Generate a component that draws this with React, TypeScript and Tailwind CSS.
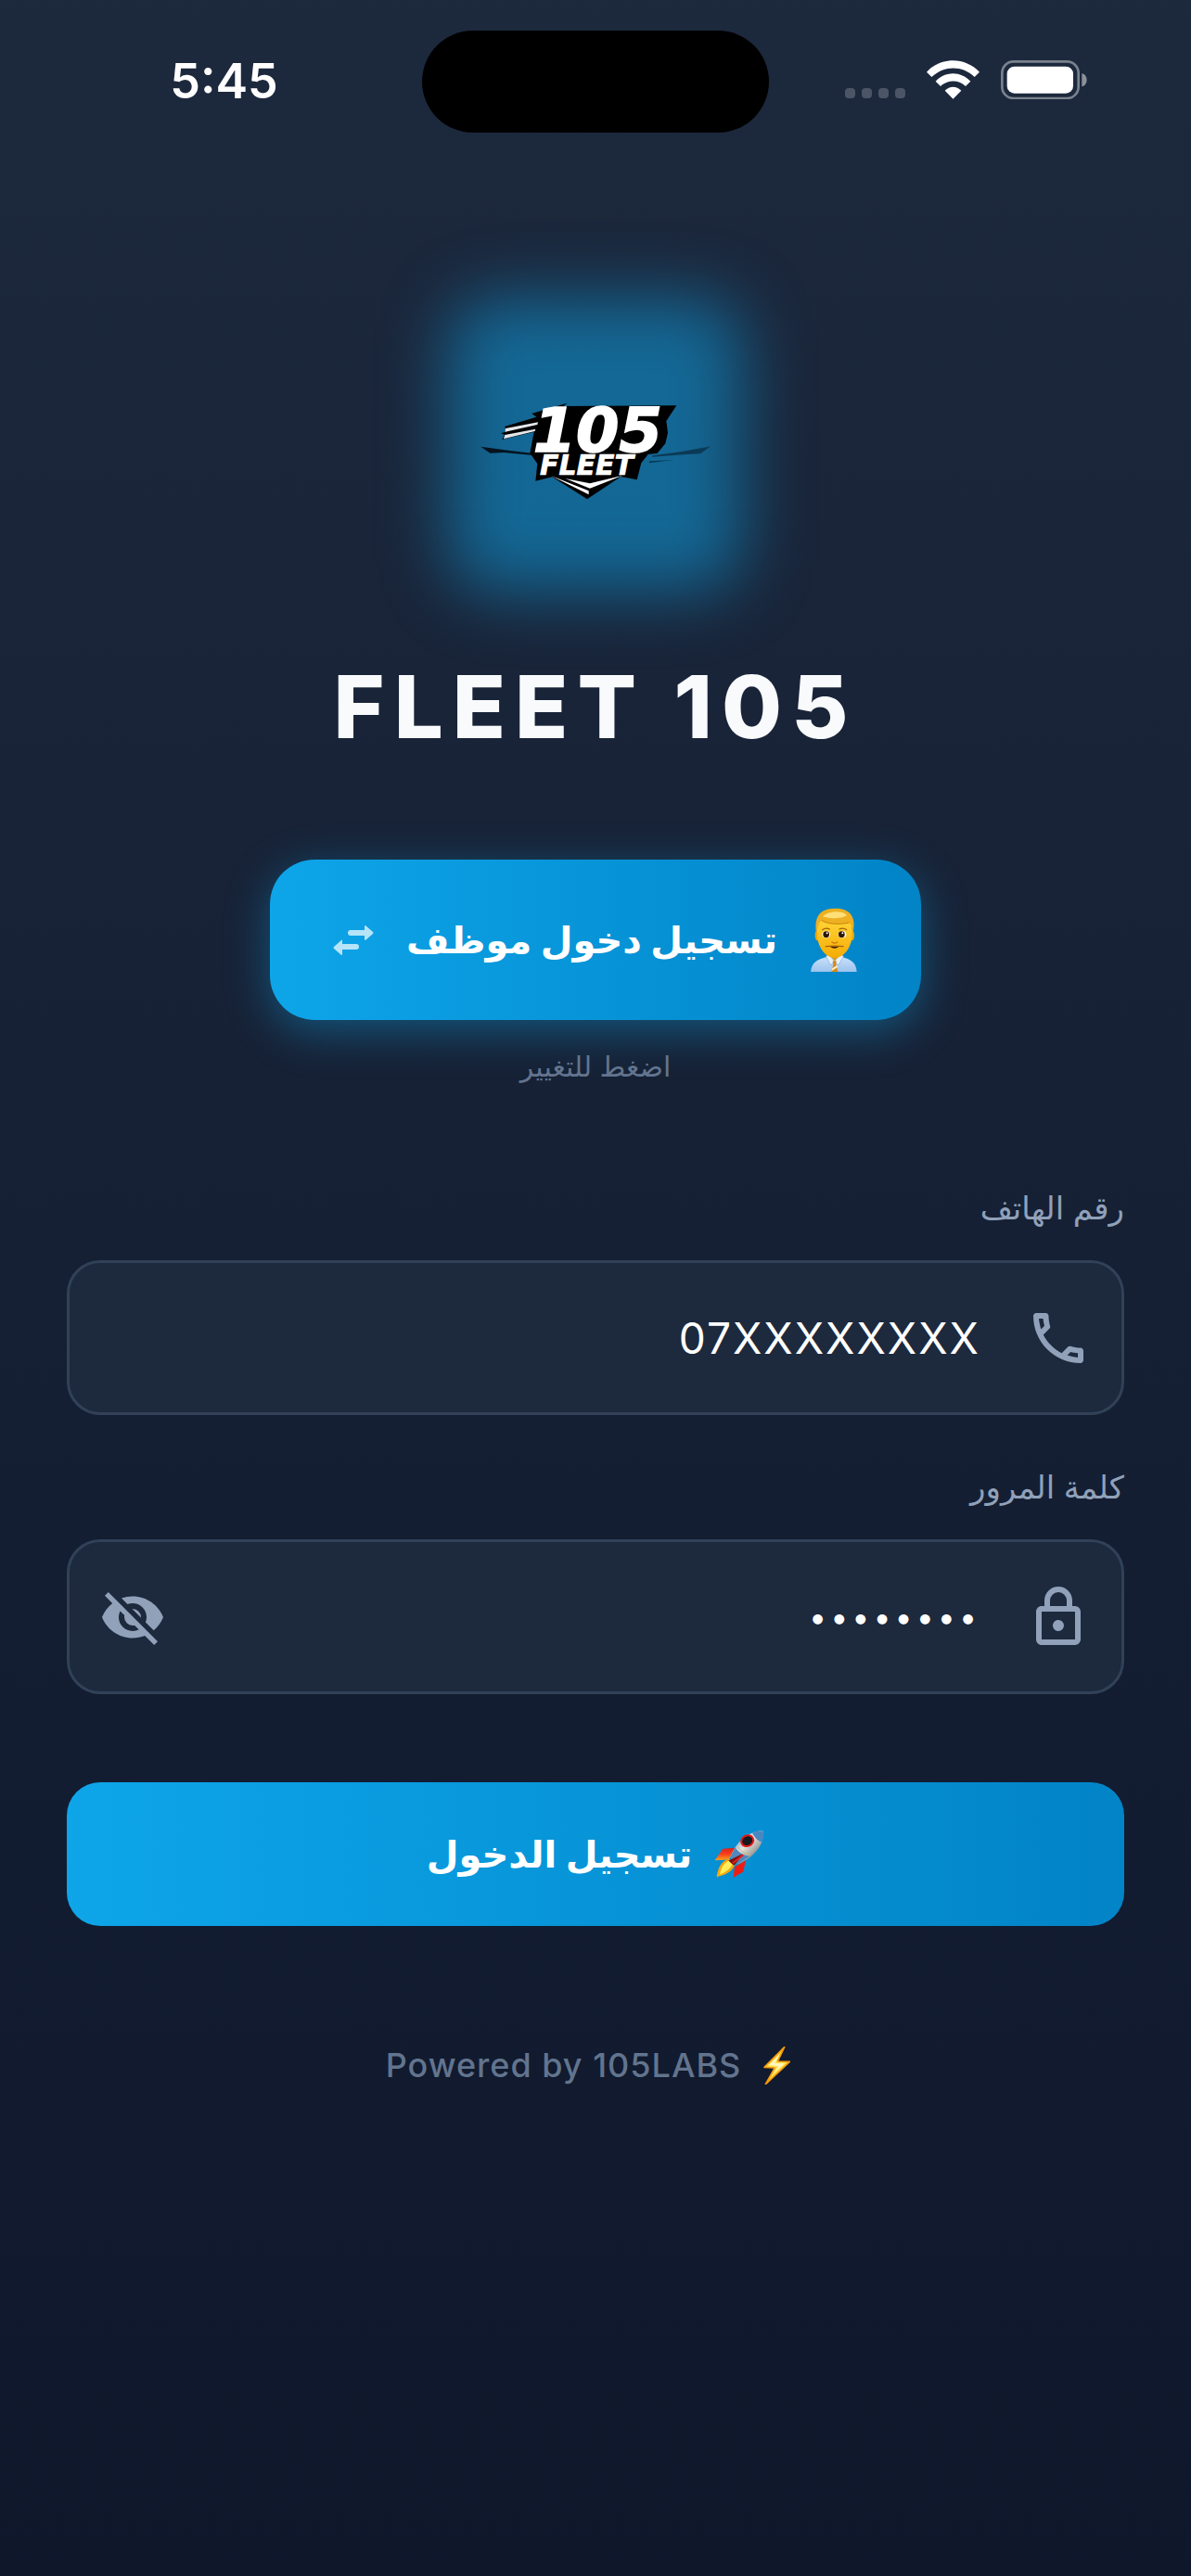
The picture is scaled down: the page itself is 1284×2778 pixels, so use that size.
import React, { useId } from 'react';

const StatusBar = () => (
  <header className="grid grid-cols-[1fr_374px_1fr] items-center pt-[33px]">
    <div className="pl-7 text-center text-[52px] leading-[60px] font-semibold text-white">5:45</div>
    <div className="h-[110px] rounded-full bg-black" />
    <div className="flex items-end justify-center gap-[23px] pr-[30px] pb-1">
      <div className="flex gap-[7px] pb-px">
        {[0, 1, 2, 3].map((dot) => (
          <span key={dot} className="h-[11px] w-[11px] rounded-[4px] bg-[#4b5565]" />
        ))}
      </div>
      <svg className="h-[42px] w-[57px]" viewBox="0 0 171 126" fill="#fff">
        <path d="M0 38 C46 -12 125 -12 171 38 L155 54 C115 16 56 16 16 54 Z" />
        <path d="M29 68 C61 34 110 34 142 68 L126 84 C102 62 69 62 45 84 Z" />
        <path d="M59 98 C75 82 96 82 112 98 L85.500 125 Z" />
      </svg>
      <svg className="h-[42px] w-[93px]" viewBox="0 0 279 126">
        <rect x="4" y="4" width="247" height="119" rx="37" fill="none" stroke="#7a818d" strokeWidth="8" />
        <rect x="20" y="20" width="214" height="87" rx="24" fill="#fff" />
        <path d="M262 43 C283 46 283 82 262 85 Z" fill="#8b919b" />
      </svg>
    </div>
  </header>
);

const Logo = () => (
  <div dir="ltr" className="relative flex h-[316px] w-[316px] items-center justify-center">
    <div className="absolute inset-0 rounded-[48px] bg-[#0ea5e9]/52 blur-[36px]" />
    <svg className="relative h-[150px] w-[290px]" viewBox="-9 -15 870 450" role="img" aria-label="105 Fleet">
      <path d="M55 215 L150 228 L232 238 L232 244 L130 234 L85 236 Z" fill="#04131f" />
      <path d="M798 214 L700 232 L610 244 L610 248 L720 240 L765 238 Z" fill="#0b3a56" />
      <path d="M600 262 L680 258 L600 268 Z" fill="#0b3a56" />
      <path
        d="M334 74 L322 84 L688 82 L655 132 L660 170 L652 205 L626 236 L596 240 L574 268 L560 322 L508 312 L399 385 L286 313 L232 326 L238 270 L214 236 L236 120 L220 108 Z"
        fill="#000"
      />
      <path d="M132 150 L240 118 L240 164 L124 192 L132 176 L120 172 L140 166 Z" fill="#000" />
      <path d="M135 156 L240 136 L238 144 L134 167 Z M133 177 L232 158 L230 165 L129 190 Z" fill="#e5e7eb" />
      <text
        x="224"
        y="230"
        fill="#fff"
        stroke="#fff"
        strokeWidth="5"
        className="font-['DejaVu_Sans'] text-[200px] font-bold italic"
      >
        105
      </text>
      <text
        x="246"
        y="306"
        fill="#fff"
        stroke="#fff"
        strokeWidth="2"
        className="font-['DejaVu_Sans'] text-[90px] font-bold italic"
      >
        FLEET
      </text>
      <path d="M282 309 L404 358 L404 370 Z" fill="#fff" />
      <path d="M328 318 L408 334 L514 308 L408 350 Z" fill="#fff" />
    </svg>
  </div>
);

const EmployeeEmoji = () => (
  <svg className="h-[71px] w-[52px]" viewBox="40 55 156 213" aria-hidden="true">
    <defs>
      <linearGradient id="face" x1="0" y1="0" x2="0" y2="1">
        <stop offset="0" stopColor="#ffd93a" />
        <stop offset="1" stopColor="#f6ab06" />
      </linearGradient>
      <linearGradient id="shirt" x1="0" y1="0" x2="0" y2="1">
        <stop offset="0" stopColor="#c9e1fb" />
        <stop offset="1" stopColor="#9dc3ec" />
      </linearGradient>
    </defs>
    <path d="M43 265 C46 236 60 226 98 216 L142 216 C176 226 190 236 192 265 Z" fill="url(#shirt)" />
    <path d="M98 212 L120 234 L143 212 L143 204 L98 204 Z" fill="#e29a0b" />
    <path d="M93 216 L99 207 L120 230 L108 244 Z M149 216 L142 207 L120 230 L132 244 Z" fill="#e4f1ff" stroke="#86abd4" strokeWidth="2" />
    <path d="M114 230 L126 230 L125 240 L131 265 L110 265 L116 240 Z" fill="#d98b18" />
    <path d="M113 253 L129 244 L130 250 L111 262 Z" fill="#fff0cc" />
    <ellipse cx="64" cy="147" rx="7" ry="17" fill="#efa408" />
    <ellipse cx="177" cy="147" rx="7" ry="17" fill="#efa408" />
    <path d="M64 112 C64 74 177 74 177 112 L177 148 C175 187 149 220 121 220 C92 220 66 187 64 148 Z" fill="url(#face)" />
    <path d="M61 138 C52 74 84 60 124 60 C164 60 192 80 180 138 C178 124 175 112 167 106 C132 114 95 110 77 98 C68 110 66 124 61 138 Z" fill="#eeb022" />
    <path d="M82 86 C96 70 144 64 160 82 C146 92 106 96 82 86 Z" fill="#ffdf78" />
    <path d="M77 98 C95 110 132 114 167 106" fill="none" stroke="#c98309" strokeWidth="3" />
    <path d="M81 129 Q92 121 104 127 M136 127 Q148 121 159 129" fill="none" stroke="#a3620a" strokeWidth="4" strokeLinecap="round" />
    <ellipse cx="93" cy="144" rx="13" ry="11" fill="#fff" />
    <ellipse cx="145" cy="144" rx="13" ry="11" fill="#fff" />
    <circle cx="93" cy="144" r="10" fill="#2d1606" />
    <circle cx="143" cy="144" r="10" fill="#2d1606" />
    <circle cx="96" cy="140" r="3" fill="#fff" />
    <circle cx="146" cy="140" r="3" fill="#fff" />
    <path d="M112 169 Q120 176 129 169" fill="none" stroke="#c77a08" strokeWidth="4" strokeLinecap="round" />
    <path d="M92 183 Q120 180 148 183" fill="none" stroke="#a3600a" strokeWidth="4" strokeLinecap="round" />
    <path d="M106 184 H134 Q120 195 106 184 Z" fill="#3a1a05" />
  </svg>
);

const RocketEmoji = () => (
  <svg className="h-[53px] w-[54px]" viewBox="58 58 162 158" aria-hidden="true">
    <defs>
      <linearGradient id="hull" x1="0" y1="0" x2="1" y2="1">
        <stop offset="0.150" stopColor="#6aa3d6" />
        <stop offset="0.450" stopColor="#e3e3df" />
        <stop offset="0.650" stopColor="#a9a9a5" />
        <stop offset="0.900" stopColor="#3d4650" />
      </linearGradient>
      <linearGradient id="fin" x1="0" y1="0" x2="0" y2="1">
        <stop offset="0" stopColor="#dd2018" />
        <stop offset="0.500" stopColor="#f8401c" />
        <stop offset="1" stopColor="#fba21b" />
      </linearGradient>
    </defs>
    <path d="M125 117 L86 120 L60 157 L106 155 Z" fill="url(#fin)" />
    <path d="M160 157 L124 178 L120 213 L152 194 Z" fill="#ee1d14" />
    <path d="M106 153 C82 158 70 180 66 211 C91 205 111 199 124 174 Z" fill="#f5a70e" />
    <path d="M108 157 C88 165 80 182 76 203 C96 195 110 184 118 169 Z" fill="#ffed5a" />
    <path d="M216 62 C178 60 133 88 110 146 L134 170 C178 151 220 116 216 62 Z" fill="url(#hull)" />
    <path d="M216 62 C204 61 192 63 181 68 C187 82 198 94 212 98 C217 88 218 74 216 62 Z" fill="#4987c2" />
    <path d="M126 116 L110 146 L134 170 L173 144 C154 142 137 132 126 116 Z" fill="#4e88bd" />
    <path d="M132 112 C142 126 156 136 174 140" fill="none" stroke="#c9b77c" strokeWidth="3" />
    <path d="M104 158 L148 137 C141 152 132 164 121 174 Z" fill="#7d1010" />
    <path d="M118 166 L152 139" stroke="#e5201a" strokeWidth="6" />
    <ellipse cx="165" cy="94" rx="20" ry="17" transform="rotate(-25 165 94)" fill="#16191d" stroke="#e21818" strokeWidth="6" />
  </svg>
);

const BoltEmoji = () => (
  <svg className="h-[41px] w-[29px]" viewBox="1265 57 87 123" aria-hidden="true">
    <path d="M1333 59 L1268 124 L1302 126 L1272 179 L1350 106 L1311 105 Z" fill="#ffdf4d" stroke="#f59a0b" strokeWidth="5" strokeLinejoin="round" />
    <path d="M1318 82 L1282 118 L1314 120 L1297 145 L1334 112 L1302 111 Z" fill="#fff6bf" />
  </svg>
);

const SwapIcon = () => (
  <svg className="h-[32px] w-[44px]" viewBox="0 0 44 32" fill="#b6e4f9" aria-hidden="true">
    <path d="M19 5 H34 V1 Q34 0 35 0 L43 7 Q44 8 43 9 L35 16 Q34 16 34 15 V11 H19 A3 3 0 0 1 19 5 Z" />
    <path d="M25 20 H10 V16 Q10 15 9 16 L1 23 Q0 24 1 25 L9 32 Q10 32 10 31 V26 H25 A3 3 0 0 0 25 20 Z" />
  </svg>
);

const phonePath =
  'M20,15.5C18.8,15.5 17.5,15.3 16.4,14.9C16.3,14.9 16.2,14.9 16.1,14.9C15.8,14.9 15.6,15 15.4,15.2L13.2,17.4C10.4,15.9 8,13.6 6.6,10.8L8.8,8.6C9.1,8.3 9.2,7.9 9,7.6C8.7,6.5 8.5,5.2 8.5,4C8.5,3.5 8,3 7.5,3H4C3.5,3 3,3.5 3,4C3,13.4 10.6,21 20,21C20.5,21 21,20.5 21,20V16.5C21,16 20.5,15.5 20,15.5M5,5H6.5C6.6,5.9 6.8,6.8 7,7.6L5.8,8.8C5.4,7.6 5.1,6.3 5,5M19,19C17.7,18.9 16.4,18.6 15.2,18.2L16.4,17C17.2,17.2 18.1,17.4 19,17.4V19Z';
const lockPath =
  'M12,17C10.89,17 10,16.1 10,15C10,13.89 10.89,13 12,13A2,2 0 0,1 14,15A2,2 0 0,1 12,17M18,20V10H6V20H18M18,8A2,2 0 0,1 20,10V20A2,2 0 0,1 18,22H6C4.89,22 4,21.1 4,20V10C4,8.89 4.89,8 6,8H7V6A5,5 0 0,1 12,1A5,5 0 0,1 17,6V8H18M12,3A3,3 0 0,0 9,6V8H15V6A3,3 0 0,0 12,3Z';
const eyeOffPath =
  'M11.83,9L15,12.16C15,12.11 15,12.05 15,12A3,3 0 0,0 12,9C11.94,9 11.89,9 11.83,9M7.53,9.8L9.08,11.35C9.03,11.56 9,11.77 9,12A3,3 0 0,0 12,15C12.22,15 12.44,14.97 12.65,14.92L14.2,16.45C13.53,16.78 12.79,17 12,17A5,5 0 0,1 7,12C7,11.21 7.2,10.47 7.53,9.8M2,4.27L4.28,6.55L4.73,7C3.08,8.3 1.78,10 1,12C2.73,16.39 7,19.5 12,19.5C13.55,19.5 15.03,19.2 16.38,18.66L16.81,19.08L19.73,22L21,20.73L3.27,3M12,7A5,5 0 0,1 17,12C17,12.64 16.87,13.26 16.64,13.82L19.57,16.75C21.07,15.5 22.27,13.86 23,12C21.27,7.61 17,4.5 12,4.5C10.6,4.5 9.26,4.75 8,5.2L10.17,7.35C10.74,7.13 11.35,7 12,7Z';

const FieldIcon = ({ path }: { path: string }) => (
  <svg className="h-18 w-18 shrink-0 fill-slate-400" viewBox="0 0 24 24" aria-hidden="true">
    <path d={path} />
  </svg>
);

type FieldProps = {
  label: string;
  type: string;
  placeholder: string;
  icon: string;
  action?: React.ReactNode;
};

const Field = ({ label, type, placeholder, icon, action }: FieldProps) => {
  const id = useId();
  return (
    <div>
      <label htmlFor={id} className="block text-[34px] leading-[40px] text-slate-400">
        {label}
      </label>
      <div className="mt-9 flex h-[167px] items-center gap-12 rounded-[36px] border-3 border-slate-700 bg-slate-800 px-8">
        <FieldIcon path={icon} />
        <input
          id={id}
          type={type}
          dir="ltr"
          placeholder={placeholder}
          className={`h-full min-w-0 flex-1 bg-transparent text-right text-white outline-none placeholder:text-white ${
            type === 'password' ? 'text-[34px] tracking-[4px]' : 'text-[46px] tracking-[2px]'
          }`}
        />
        {action}
      </div>
    </div>
  );
};

const App = () => {
  return (
    <div className="min-h-screen bg-linear-to-b from-slate-800 to-slate-900 font-['Inter','DejaVu_Sans',sans-serif]">
      <StatusBar />

      <main dir="rtl" className="flex flex-col items-center px-18 pt-[179px]">
        <Logo />
        <h1 dir="ltr" className="mt-[68px] text-[94px] leading-[112px] font-extrabold tracking-[10px] text-slate-50">
          FLEET 105
        </h1>

        <button
          type="button"
          className="mt-[109px] flex h-[173px] w-[702px] items-center justify-between rounded-[48px] bg-linear-to-r from-[#0ea5e9] to-[#0284c7] px-17 text-[40px] font-bold text-white shadow-[0_12px_48px_rgba(14,165,233,0.400)]"
        >
          <EmployeeEmoji />
          <span>تسجيل دخول موظف</span>
          <SwapIcon />
        </button>
        <p className="mt-7 text-[30px] leading-[44px] text-slate-500">اضغط للتغيير</p>

        <form className="mt-[111px] w-full" onSubmit={(e) => e.preventDefault()}>
          <div className="space-y-[58px]">
            <Field label="رقم الهاتف" type="tel" placeholder="07XXXXXXXX" icon={phonePath} />
            <Field
              label="كلمة المرور"
              type="password"
              placeholder="••••••••"
              icon={lockPath}
              action={
                <button type="button" aria-label="إظهار كلمة المرور">
                  <FieldIcon path={eyeOffPath} />
                </button>
              }
            />
          </div>
          <button
            type="submit"
            className="mt-[95px] flex h-[155px] w-full items-center justify-center gap-6 rounded-[36px] bg-linear-to-r from-[#0ea5e9] to-[#0284c7] text-[40px] font-bold text-white"
          >
            <RocketEmoji />
            <span>تسجيل الدخول</span>
          </button>
        </form>

        <footer dir="ltr" className="mt-[126px] flex items-center gap-6 pr-4 text-[36px] leading-[48px] font-medium tracking-[1px] text-slate-500">
          <span>Powered by 105LABS</span>
          <BoltEmoji />
        </footer>
      </main>
    </div>
  );
};

export default App;
